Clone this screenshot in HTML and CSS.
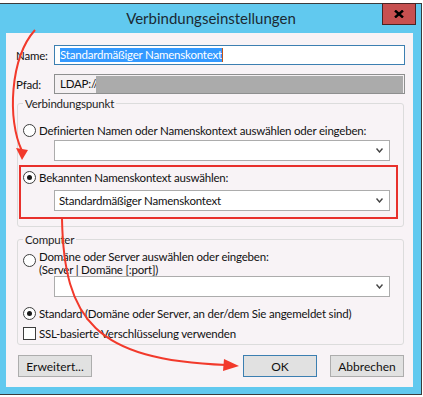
FILE: index.html
```html
<!DOCTYPE html>
<html lang="de">
<head>
    <meta charset="UTF-8">
    <title>Verbindungseinstellungen</title>
    <link rel="stylesheet" href="styles.css">
</head>
<body>
    <div class="window">
        <div class="titlebar">
            <div class="title">Verbindungseinstellungen</div>
            <button class="close-btn" aria-label="Schließen">
                <svg width="10" height="8" viewBox="0 0 10 8"><path d="M1 0.5 L9 7.5 M9 0.5 L1 7.5" stroke="#000" stroke-width="2.4"/></svg>
            </button>
        </div>

        <div class="client">
            <div class="field-row">
                <label class="field-label">Name:</label>
                <div class="textbox focused"><span class="selection">Standardmäßiger Namenskontext</span><span class="caret"></span></div>
            </div>
            <div class="field-row row-path">
                <label class="field-label">Pfad:</label>
                <div class="textbox readonly">LDAP://<span class="redacted"></span></div>
            </div>

            <fieldset class="group group-point">
                <legend>Verbindungspunkt</legend>
                <div class="option option-first"><span class="radio"></span>Definierten Namen oder Namenskontext auswählen oder eingeben:</div>
                <div class="combo combo-first"><span class="combo-text"></span><span class="chevron"></span></div>

                <div class="marked">
                    <div class="option"><span class="radio checked"></span>Bekannten Namenskontext auswählen:</div>
                    <div class="combo combo-marked"><span class="combo-text">Standardmäßiger Namenskontext</span><span class="chevron"></span></div>
                </div>
            </fieldset>

            <fieldset class="group group-computer">
                <legend>Computer</legend>
                <div class="option option-multi"><span class="radio"></span><span>Domäne oder Server auswählen oder eingeben:<br>(Server | Domäne [:port])</span></div>
                <div class="combo"><span class="combo-text"></span><span class="chevron"></span></div>
                <div class="option option-default"><span class="radio checked"></span>Standard (Domäne oder Server, an der/dem Sie angemeldet sind)</div>
                <div class="option option-check"><span class="checkbox"></span>SSL-basierte Verschlüsselung verwenden</div>
            </fieldset>

            <div class="buttons">
                <button class="btn">Erweitert...</button>
                <span class="spacer"></span>
                <button class="btn default">OK</button>
                <button class="btn">Abbrechen</button>
            </div>
        </div>
    </div>

    <!-- annotation arrows drawn over the dialog -->
    <svg class="annotations" width="423" height="397" viewBox="0 0 423 397">
        <path d="M35 30 C10 58 7 120 22 151" fill="none" stroke="#f2392b" stroke-width="2"/>
        <polygon points="16,148 28,150 22,160" fill="#f2392b"/>
        <path d="M62 219 C64 320 95 360 226 365" fill="none" stroke="#f2392b" stroke-width="2"/>
        <polygon points="224,359 239,366 223,371" fill="#f2392b"/>
    </svg>
</body>
</html>
```

FILE: styles.css
```css
body {
    margin: 0;
    background-color: #ffffff;
    font-family: 'Lato', sans-serif;
    font-size: 11.5px;
    letter-spacing: -0.2px;
    color: #111111;
    width: 423px;
    height: 397px;
    overflow: hidden;
    position: relative;
}

.window {
    margin-top: 3px;
    width: 421px;
    height: 390px;
    background-color: #61c9ef;
    border-top: 1px solid #3b3b3b;
    border-right: 1px solid #3b3b3b;
    border-bottom: 1px solid #3b3b3b;
}

.titlebar {
    height: 29px;
    display: grid;
    grid-template-columns: 1fr auto 1fr;
}

.title {
    grid-column: 2;
    font-size: 15px;
    letter-spacing: 0;
    line-height: 29px;
    color: #1b2a33;
    padding-left: 1px;
}

.close-btn {
    grid-column: 3;
    justify-self: end;
    align-self: start;
    margin: -1px 5px 0 0;
    width: 34px;
    height: 22px;
    padding: 0;
    background-color: #c75050;
    border: 1px solid #4a2424;
    display: flex;
    align-items: center;
    justify-content: center;
}

.client {
    margin-left: 6px;
    width: 407px;
    height: 354px;
    box-sizing: border-box;
    padding: 12px 8px 0 10px;
    background-color: #f8f3f6;
}

.field-row {
    display: flex;
    align-items: center;
    height: 20px;
}

.row-path {
    margin-top: 9px;
}

.field-label {
    width: 38px;
}

.textbox {
    width: 351px;
    height: 20px;
    box-sizing: border-box;
    border: 1px solid #abadb3;
    background-color: #ffffff;
    padding-left: 5px;
    display: flex;
    align-items: center;
    white-space: nowrap;
    overflow: hidden;
}

.textbox.focused {
    border-color: #3c7fb1;
}

.selection {
    background-color: #3399ff;
    color: #ffffff;
    line-height: 14px;
}

.caret {
    width: 1px;
    height: 14px;
    background-color: #c2541a;
}

.textbox.readonly {
    background-color: #f4f0f2;
    border-color: #8e8f8f;
    align-items: stretch;
    line-height: 18px;
}

.redacted {
    flex: 1;
    background-color: #ababab;
    margin: 1px 1px 0 -2px;
}

.group {
    margin: 2px 1px 0 1px;
    padding: 0 5px 7px 5px;
    border: 1px solid #dcdcdc;
    border-radius: 3px;
}

.group legend {
    padding: 0 2px;
    line-height: 15px;
    color: #1e1e1e;
}

.option-first {
    margin-top: 12px;
}

.option {
    display: flex;
    align-items: center;
    gap: 3px;
    line-height: 15px;
    white-space: nowrap;
}

.radio {
    width: 13px;
    height: 13px;
    box-sizing: border-box;
    border: 1px solid #3d3d3d;
    border-radius: 50%;
    background-color: #ffffff;
    display: flex;
    align-items: center;
    justify-content: center;
    flex-shrink: 0;
}

.radio.checked::after {
    content: "";
    width: 5px;
    height: 5px;
    border-radius: 50%;
    background-color: #1a1a1a;
}

.checkbox {
    width: 13px;
    height: 13px;
    box-sizing: border-box;
    border: 1px solid #3d3d3d;
    background-color: #ffffff;
    flex-shrink: 0;
}

.combo {
    margin-left: 31px;
    width: 336px;
    height: 21px;
    box-sizing: border-box;
    border: 1px solid #acacac;
    background-color: #ffffff;
    display: flex;
    align-items: center;
    padding: 0 6px 0 4px;
}

.combo-first {
    margin-top: 2px;
}

.combo-text {
    flex: 1;
    white-space: nowrap;
}

.chevron {
    width: 7px;
    height: 5px;
    background: url("data:image/svg+xml,%3Csvg xmlns='http://www.w3.org/2000/svg' width='7' height='5'%3E%3Cpath d='M0.5 0.5 L3.5 4 L6.5 0.5' fill='none' stroke='%23444' stroke-width='1.4'/%3E%3C/svg%3E") no-repeat;
}

.marked {
    margin: 4px 0 0 -4px;
    width: 379px;
    box-sizing: border-box;
    border: 2px solid #e8302c;
    padding: 3px 0 6px 2px;
}

.combo-marked {
    margin-top: 5px;
}

.group-computer {
    margin-top: 5px;
    padding-bottom: 3px;
}

.option-multi {
    margin-top: 3px;
    align-items: flex-start;
    line-height: 13px;
}

.option-multi .radio {
    margin-top: 4px;
}

.option-default {
    margin-top: 9px;
}

.option-check {
    margin-top: 5px;
}

.buttons {
    display: flex;
    gap: 13px;
    margin: 10px 1px 0 2px;
}

.spacer {
    flex: 1;
}

.btn {
    width: 74px;
    height: 22px;
    padding: 0;
    font-family: 'Lato', sans-serif;
    font-size: 12px;
    color: #111111;
    background-color: #e1e1e1;
    border: 1px solid #adadad;
}

.btn.default {
    border-color: #3c7fb1;
}

.annotations {
    position: absolute;
    left: 0;
    top: 0;
    pointer-events: none;
}
```
